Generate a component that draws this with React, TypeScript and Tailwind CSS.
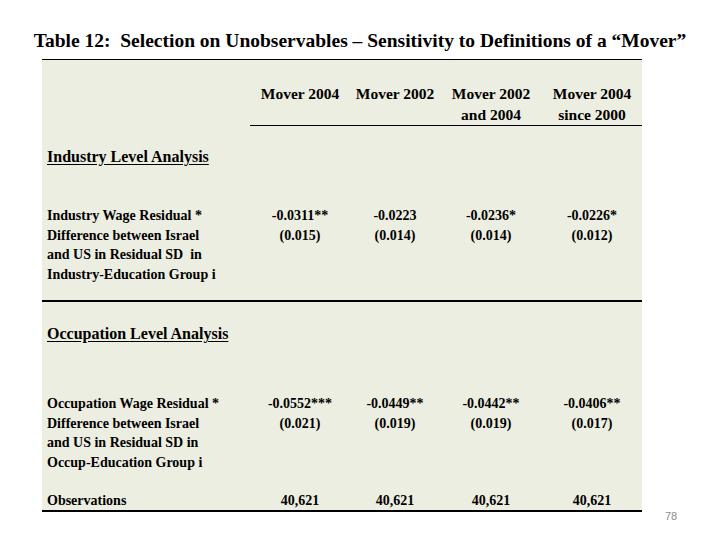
import React from "react"

const COLS = ["w-[100px]", "w-[90px]", "w-[102px]", "w-[100px]"]

const HEADERS = [["Mover 2004"], ["Mover 2002"], ["Mover 2002", "and 2004"], ["Mover 2004", "since 2000"]]

const INDUSTRY = {
  label: ["Industry Wage Residual *", "Difference between Israel", "and US in Residual SD  in", "Industry-Education Group i"],
  values: [
    ["-0.0311**", "(0.015)"],
    ["-0.0223", "(0.014)"],
    ["-0.0236*", "(0.014)"],
    ["-0.0226*", "(0.012)"],
  ],
}

const OCCUPATION = {
  label: ["Occupation Wage Residual *", "Difference between Israel", "and US in Residual SD in", "Occup-Education Group i"],
  values: [
    ["-0.0552***", "(0.021)"],
    ["-0.0449**", "(0.019)"],
    ["-0.0442**", "(0.019)"],
    ["-0.0406**", "(0.017)"],
  ],
}

function SectionTitle({ children, className }: { children: React.ReactNode; className: string }) {
  return (
    <div className={`pl-[5px] text-[16px] leading-[20px] font-bold underline underline-offset-2 ${className}`}>
      {children}
    </div>
  )
}

function Row({ label, values, className }: { label: string[]; values: string[][]; className: string }) {
  return (
    <div className={`flex text-[14px] leading-[19.5px] font-bold ${className}`}>
      <div className="w-[208px] pl-[5px] whitespace-pre">
        {label.map((l) => (
          <div key={l}>{l}</div>
        ))}
      </div>
      {values.map((v, i) => (
        <div key={i} className={`${COLS[i]} text-center`}>
          {v.map((line) => (
            <div key={line}>{line}</div>
          ))}
        </div>
      ))}
    </div>
  )
}

export default function App() {
  return (
    <div
      className="relative w-[720px] h-[540px] bg-white overflow-hidden text-black"
      style={{ fontFamily: '"Liberation Serif", "Times New Roman", serif' }}
    >
      <h1 className="pt-[29px] text-center text-[19.5px] leading-[24px] font-bold">
        Table 12:&nbsp; Selection on Unobservables – Sensitivity to Definitions of a “Mover”
      </h1>

      <div className="ml-[42px] mt-[6px] w-[600px] bg-[#eceee1] border-t border-black border-b-2">
        <div className="flex pt-[23px]">
          <div className="w-[208px]" />
          <div className="flex border-b border-black text-[15.5px] leading-[21px] font-bold">
            {HEADERS.map((h, i) => (
              <div key={i} className={`${COLS[i]} text-center`}>
                {h.map((line) => (
                  <div key={line}>{line}</div>
                ))}
              </div>
            ))}
          </div>
        </div>

        <SectionTitle className="mt-[21px]">Industry Level Analysis</SectionTitle>
        <Row className="mt-[39px] pb-[16px] border-b-2 border-black" {...INDUSTRY} />

        <SectionTitle className="mt-[22px]">Occupation Level Analysis</SectionTitle>
        <Row className="mt-[50px]" {...OCCUPATION} />

        <div className="flex mt-[20px] text-[14px] leading-[18px] font-bold">
          <div className="w-[208px] pl-[5px]">Observations</div>
          {COLS.map((c) => (
            <div key={c} className={`${c} text-center`}>
              40,621
            </div>
          ))}
        </div>
      </div>

      <span
        className="absolute left-[665px] top-[508px] text-[11px] text-[#8c8c8c]"
        style={{ fontFamily: '"Liberation Sans", Arial, sans-serif' }}
      >
        78
      </span>
    </div>
  )
}
